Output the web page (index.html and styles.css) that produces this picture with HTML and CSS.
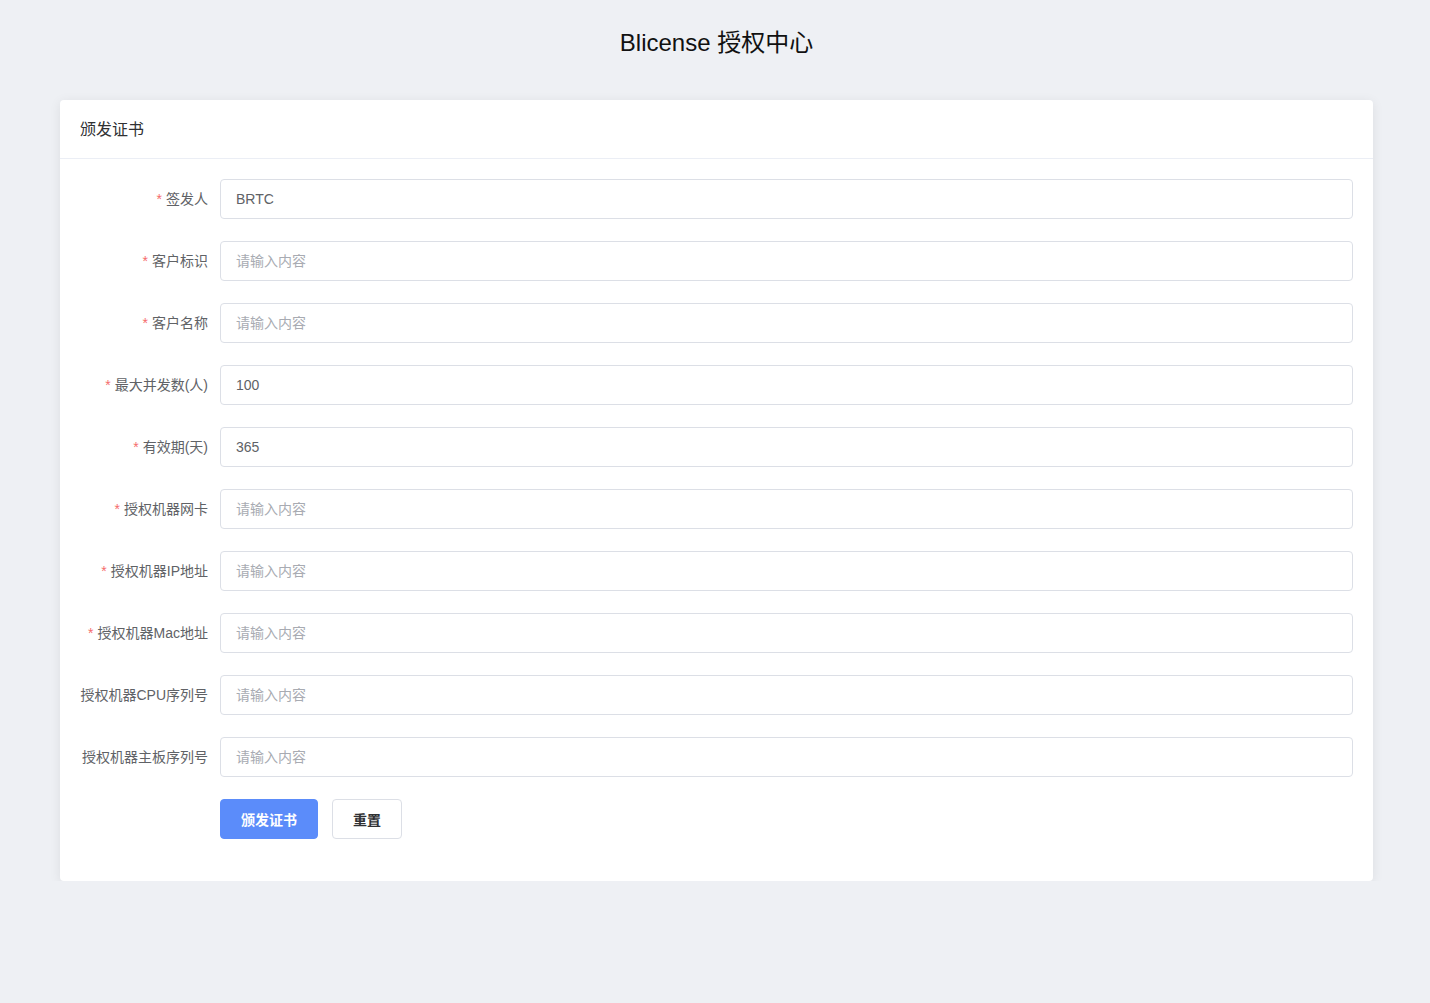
FILE: index.html
```html
<!DOCTYPE html>
<html lang="zh-CN">
<head>
<meta charset="utf-8">
<title>Blicense 授权中心</title>
<link rel="stylesheet" href="styles.css">
</head>
<body>
<div class="page">
  <h1 class="title">Blicense 授权中心</h1>
  <div class="card">
    <div class="card-header">颁发证书</div>
    <form class="card-body">
      <div class="form-item"><label class="label required">签发人</label><input class="input" value="BRTC"></div>
      <div class="form-item"><label class="label required">客户标识</label><input class="input" placeholder="请输入内容"></div>
      <div class="form-item"><label class="label required">客户名称</label><input class="input" placeholder="请输入内容"></div>
      <div class="form-item"><label class="label required">最大并发数(人)</label><input class="input" value="100"></div>
      <div class="form-item"><label class="label required">有效期(天)</label><input class="input" value="365"></div>
      <div class="form-item"><label class="label required">授权机器网卡</label><input class="input" placeholder="请输入内容"></div>
      <div class="form-item"><label class="label required">授权机器IP地址</label><input class="input" placeholder="请输入内容"></div>
      <div class="form-item"><label class="label required">授权机器Mac地址</label><input class="input" placeholder="请输入内容"></div>
      <div class="form-item"><label class="label">授权机器CPU序列号</label><input class="input" placeholder="请输入内容"></div>
      <div class="form-item"><label class="label">授权机器主板序列号</label><input class="input" placeholder="请输入内容"></div>
      <div class="form-item">
        <span class="label"></span>
        <div class="actions">
          <button type="button" class="btn btn-primary">颁发证书</button>
          <button type="button" class="btn">重置</button>
        </div>
      </div>
    </form>
  </div>
</div>
</body>
</html>
```

FILE: styles.css
```css
* { box-sizing: border-box; }
html, body { margin: 0; padding: 0; }
body {
  background: #eef0f4;
  font-family: "Liberation Sans", "Noto Sans CJK SC", sans-serif;
  color: #606266;
}
.page {
  padding: 25px 57px 0 60px;
}
.title {
  margin: 0 0 39px;
  text-align: center;
  font-size: 24px;
  line-height: 36px;
  font-weight: 400;
  color: #111;
}
.card {
  background: #fff;
  border-radius: 4px;
  box-shadow: 0 2px 12px rgba(0, 0, 0, 0.08);
  overflow: hidden;
}
.card-header {
  height: 59px;
  padding: 0 20px 2px;
  display: flex;
  align-items: center;
  border-bottom: 1px solid #ebeef5;
  font-size: 16px;
  color: #303133;
}
.card-body {
  padding: 20px 20px 20px;
  display: block;
}
.form-item {
  display: flex;
  align-items: center;
  height: 40px;
  margin-bottom: 22px;
}
.label {
  width: 140px;
  flex: none;
  padding-right: 12px;
  text-align: right;
  font-size: 14px;
  color: #606266;
  line-height: 40px;
  white-space: nowrap;
}
.label.required::before {
  content: "*";
  color: #f56c6c;
  margin-right: 4px;
}
.input {
  flex: 1;
  min-width: 0;
  height: 40px;
  border: 1px solid #dcdfe6;
  border-radius: 4px;
  padding: 0 15px;
  font-family: inherit;
  font-size: 14px;
  color: #606266;
  background: #fff;
  outline: none;
}
.input::placeholder { color: #a8abb2; }
.actions {
  display: flex;
  gap: 14px;
}
.btn {
  height: 40px;
  padding: 0 20px;
  border: 1px solid #dcdfe6;
  border-radius: 4px;
  background: #fff;
  color: #303133;
  font-family: inherit;
  font-size: 14px;
  font-weight: 700;
  cursor: pointer;
}
.btn-primary {
  background: #5b8cfa;
  border-color: #5b8cfa;
  color: #fff;
  width: 98px;
}
.btn:not(.btn-primary) { width: 70px; }
```
